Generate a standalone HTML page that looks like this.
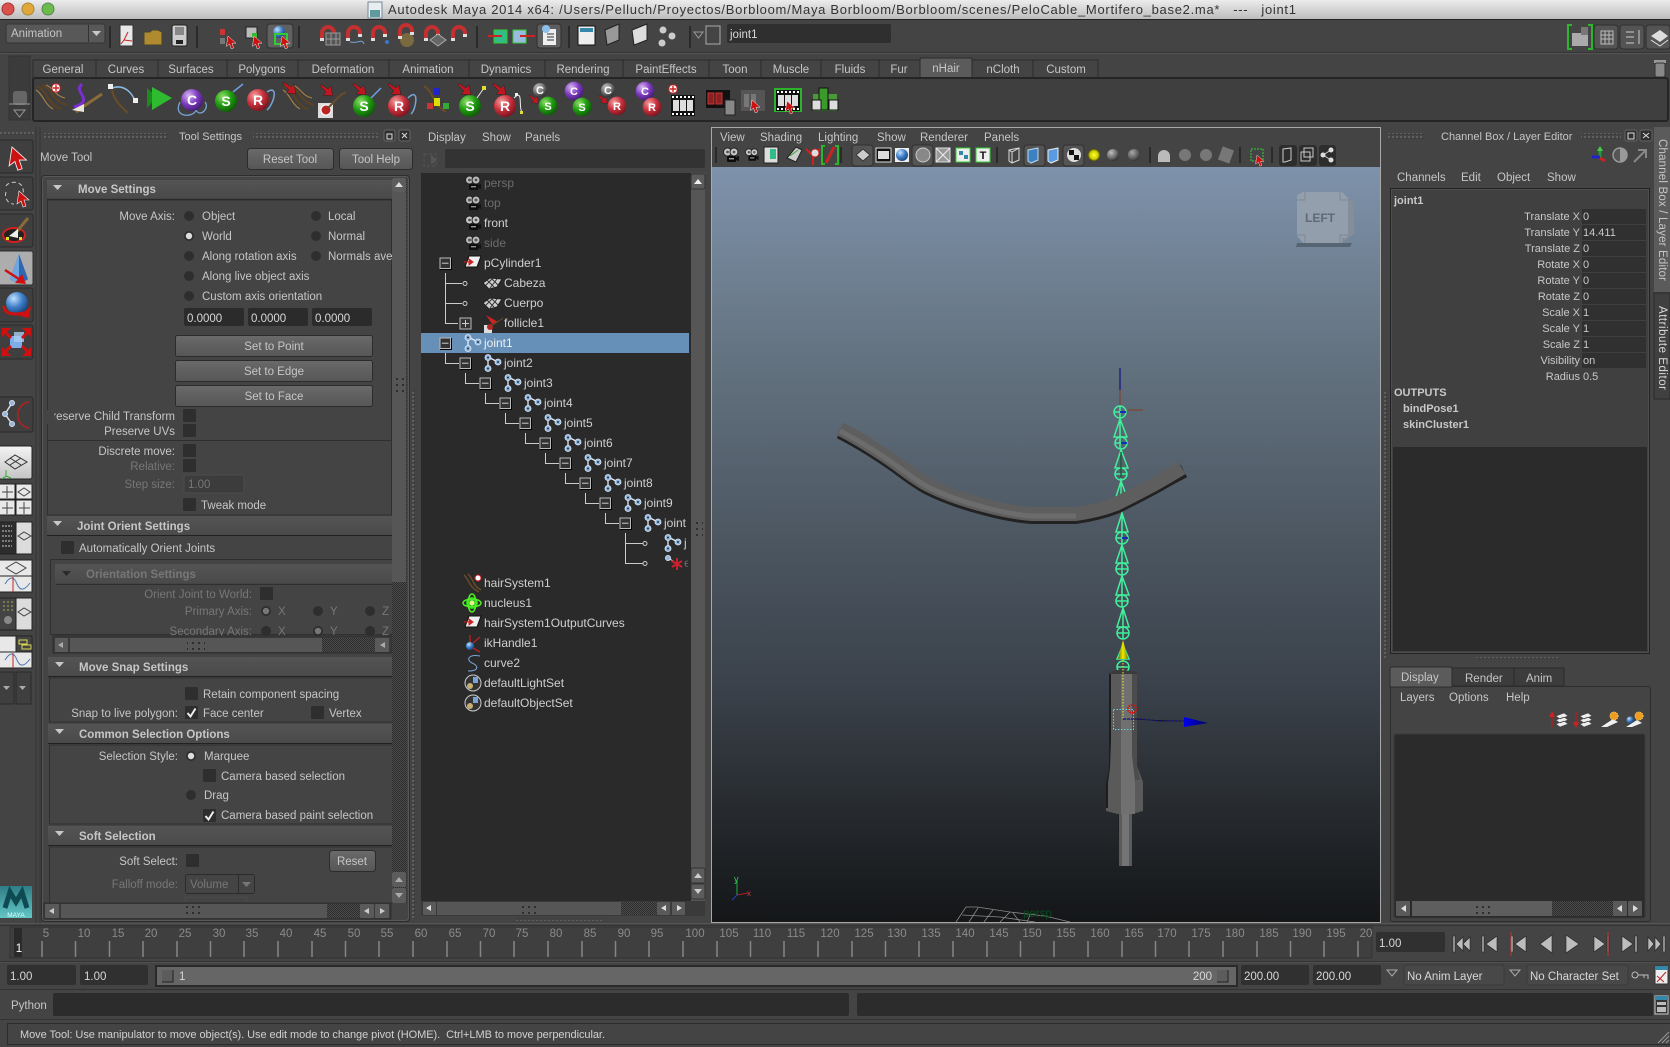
<!DOCTYPE html>
<html><head><meta charset="utf-8"><title>Maya</title>
<style>
html,body{margin:0;padding:0;background:#444;width:1670px;height:1047px;overflow:hidden}
svg{display:block}
text{font-family:"Liberation Sans",Arial,sans-serif;font-size:11.5px;fill:#c6c6c6;white-space:pre}
.d{fill:#777}.b{font-weight:bold}.r{text-anchor:end}.m{text-anchor:middle}
.o{font-size:12px;fill:#d0d0d0}.g{fill:#6e6e6e}
.c{font-size:11px;fill:#c8c8c8}
.t{fill:#8a8a8a;font-size:11.5px;text-anchor:middle}
.f{fill:#d8d8d8}
.w{fill:#fff;font-weight:bold;font-size:14px;text-anchor:middle}
.x{fill:#fff;font-weight:bold;font-size:11px;text-anchor:middle}
</style></head><body>
<svg xmlns="http://www.w3.org/2000/svg" width="1670" height="1047" viewBox="0 0 1670 1047">
<defs>
<linearGradient id="tb" x1="0" y1="0" x2="0" y2="1"><stop offset="0" stop-color="#ececec"/><stop offset="1" stop-color="#bdbdbd"/></linearGradient>
<linearGradient id="vp" x1="0" y1="0" x2="0" y2="1"><stop offset="0" stop-color="#7e92ab"/><stop offset=".24" stop-color="#657482"/><stop offset=".48" stop-color="#4d5863"/><stop offset=".7" stop-color="#394049"/><stop offset=".84" stop-color="#282c30"/><stop offset="1" stop-color="#141618"/></linearGradient>
<linearGradient id="btn" x1="0" y1="0" x2="0" y2="1"><stop offset="0" stop-color="#6a6a6a"/><stop offset="1" stop-color="#565656"/></linearGradient>
<linearGradient id="hdr" x1="0" y1="0" x2="0" y2="1"><stop offset="0" stop-color="#545454"/><stop offset="1" stop-color="#4a4a4a"/></linearGradient>
<linearGradient id="lay" x1="0" y1="0" x2="0" y2="1"><stop offset="0" stop-color="#f4f4f4"/><stop offset="1" stop-color="#c4c4c4"/></linearGradient>
<linearGradient id="yl" x1="0" y1="0" x2="1" y2="0"><stop offset="0" stop-color="#6b6b00"/><stop offset=".5" stop-color="#eded00"/><stop offset="1" stop-color="#777700"/></linearGradient>
<linearGradient id="bl" x1="0" y1="0" x2="1" y2="0"><stop offset="0" stop-color="#0000ee"/><stop offset="1" stop-color="#000066"/></linearGradient>
<linearGradient id="mya" x1="0" y1="0" x2="0" y2="1"><stop offset="0" stop-color="#2f7d86"/><stop offset="1" stop-color="#62c6c4"/></linearGradient>
<radialGradient id="sg" cx=".35" cy=".3" r=".8"><stop offset="0" stop-color="#8fe06a"/><stop offset=".5" stop-color="#1f9a10"/><stop offset="1" stop-color="#0a4d05"/></radialGradient>
<radialGradient id="sr" cx=".35" cy=".3" r=".8"><stop offset="0" stop-color="#f2a0a0"/><stop offset=".5" stop-color="#c8303c"/><stop offset="1" stop-color="#6a0f18"/></radialGradient>
<radialGradient id="sp" cx=".35" cy=".3" r=".8"><stop offset="0" stop-color="#d8b8f0"/><stop offset=".5" stop-color="#7e3cc0"/><stop offset="1" stop-color="#3a1468"/></radialGradient>
<radialGradient id="sb" cx=".35" cy=".3" r=".8"><stop offset="0" stop-color="#c0e0ff"/><stop offset=".5" stop-color="#3f7fc8"/><stop offset="1" stop-color="#123a70"/></radialGradient>
<radialGradient id="sgr" cx=".35" cy=".3" r=".8"><stop offset="0" stop-color="#c0c0c0"/><stop offset=".6" stop-color="#666"/><stop offset="1" stop-color="#222"/></radialGradient>
<radialGradient id="sy" cx=".5" cy=".5" r=".5"><stop offset="0" stop-color="#ffff30"/><stop offset=".7" stop-color="#cccc00"/><stop offset="1" stop-color="#555500"/></radialGradient>
<pattern id="hatch" width="2" height="2" patternUnits="userSpaceOnUse"><rect width="2" height="2" fill="#4c4c4c"/><rect width="1" height="1" fill="#2c2c2c"/><rect x="1" y="1" width="1" height="1" fill="#2c2c2c"/></pattern>
<pattern id="dots" width="4" height="4" patternUnits="userSpaceOnUse"><rect x="0" y="0" width="2" height="2" fill="#5f5f5f"/><rect x="2" y="2" width="1" height="1" fill="#333"/></pattern>
<pattern id="grip" width="6" height="6" patternUnits="userSpaceOnUse"><rect width="2" height="2" fill="#2f2f2f"/></pattern>

<g id="cam"><circle cx="4.5" cy="5" r="4" fill="#c8c8c8" stroke="#222"/><circle cx="11" cy="5" r="4" fill="#c8c8c8" stroke="#222"/><circle cx="4.5" cy="5" r="1.4" fill="#555"/><circle cx="11" cy="5" r="1.4" fill="#555"/><rect x="4" y="9" width="9" height="6" rx="1" fill="#0c0c0c"/><rect x="6" y="11" width="5" height="1.4" fill="#999"/><path d="M13 10L16 9V14L13 13Z" fill="#111"/></g>
<g id="jnt"><path d="M3 2V13M3 2L13 7" stroke="#e4eaf2" stroke-width="1.3" fill="none"/><circle cx="3" cy="2.5" r="3" fill="#8fb7e0" stroke="#dfeaf6" stroke-width=".8"/><circle cx="13" cy="7" r="3" fill="#8fb7e0" stroke="#dfeaf6" stroke-width=".8"/><circle cx="3" cy="13.500" r="3" fill="#8fb7e0" stroke="#dfeaf6" stroke-width=".8"/><circle cx="3" cy="2.5" r="1" fill="#234"/><circle cx="13" cy="7" r="1" fill="#234"/><circle cx="3" cy="13.500" r="1" fill="#234"/></g>
<g id="mi"><rect x=".5" y=".5" width="11" height="11" fill="#2a2a2a" stroke="#000"/><rect x="0" y="0" width="10.5" height="10.5" fill="#333" stroke="#bbb"/><path d="M2 5.2H8.5" stroke="#ccc"/></g>
<g id="tr"><path d="M4 1H16L12 12H0Z" fill="#eee" stroke="#111"/><path d="M-1 7H8M8 7L4 4V10Z" fill="#c22" stroke="#c22"/></g>
<g id="mesh"><path d="M0 6L7 1L19 2L14 10L6 12Z" fill="#cfcfcf" stroke="#222"/><path d="M4 3L11 10M8 1L15 8M10 1L3 8M14 2L7 11" stroke="#333"/></g>
<g id="radio"><circle r="5" fill="#2e2e2e"/></g>
<g id="radw"><circle r="5" fill="#2e2e2e"/><circle r="3.2" fill="#ddd"/></g>
<g id="radd"><circle r="5" fill="#2e2e2e"/><circle r="3.2" fill="#777"/></g>
<rect id="cb" width="13" height="13" rx="1" fill="#2e2e2e"/>
<g id="cbc"><rect width="13" height="13" rx="1" fill="#2e2e2e"/><path d="M2.5 7L5.5 10.5L10.5 2.5" fill="none" stroke="#eee" stroke-width="2"/></g>
<path id="tri" d="M0 0H9L4.5 5Z" fill="#c8c8c8"/>
<g id="mag"><path d="M2 15V7A6 6 0 0 1 14 7V10" fill="none" stroke="#c43030" stroke-width="4"/><rect x="0" y="12" width="4" height="3" fill="#ddd"/><rect x="12" y="8" width="4" height="3" fill="#ddd"/></g>
<g id="hair"><path d="M0 1C10 5 11 20 24 24M5 0C15 3 15 16 30 20" fill="none" stroke="#5d4222" stroke-width="2"/><path d="M-1 5C6 9 8 20 16 24M9 0C17 3 18 11 28 13" fill="none" stroke="#a88248" stroke-width="1.100"/></g>
<g id="arw"><path d="M0 0L10 9H5L7 15L4 16L2 10L-2 13Z" fill="#c11" stroke="#eee" stroke-width=".6"/></g>
<g id="ard"><path d="M0 0L7 5L10 2L12 12L2 11L5 8L-1 2Z" fill="#c01620" stroke="#222" stroke-width=".5"/></g>
<g id="sS"><circle r="11" fill="url(#sg)"/></g>
<g id="sR"><circle r="11" fill="url(#sr)"/></g>
<g id="sC"><circle r="11" fill="url(#sp)"/></g>
<g id="sCg"><circle r="7" fill="url(#sgr)"/></g>
<g id="film"><rect width="24" height="21" fill="#111"/><path d="M1 2H23M1 19H23" stroke="#fff" stroke-dasharray="2 2" stroke-width="2"/><rect x="2" y="5" width="6" height="11" fill="#ddd"/><rect x="9" y="5" width="6" height="11" fill="#ddd"/><rect x="16" y="5" width="6" height="11" fill="#ddd"/></g>
</defs>

<rect width="1670" height="1047" fill="#444"/>

<!-- title bar -->
<rect width="1670" height="19" fill="url(#tb)"/><rect y="19" width="1670" height="1" fill="#222"/>
<circle cx="8" cy="9" r="6" fill="#d9534c" stroke="#a33"/><circle cx="28" cy="9" r="6" fill="#e0a83a" stroke="#a83"/><circle cx="48" cy="9" r="6" fill="#6dbb4b" stroke="#585"/>
<rect x="368" y="2" width="14" height="16" fill="#e8eef0" stroke="#789"/><rect x="370" y="10" width="10" height="7" fill="#5e9aa0"/>
<text x="388" y="14" textLength="908" style="font-size:13px;fill:#333">Autodesk Maya 2014 x64: /Users/Pelluch/Proyectos/Borbloom/Maya Borbloom/Borbloom/scenes/PeloCable_Mortifero_base2.ma*   ---   joint1</text>

<!-- status line -->
<rect x="6" y="24" width="99" height="19" rx="2" fill="#585858" stroke="#333"/><rect x="88" y="25" width="1" height="17" fill="#333"/>
<text x="11" y="37" fill="#bbb">Animation</text><use href="#tri" x="92" y="31"/>
<path d="M110 26V48M197 26V48M299 26V48M477 26V48M569 26V48M690 26V48" stroke="#2a2a2a" stroke-width="2"/>
<rect x="120" y="25" width="13" height="21" fill="#e8e8e8" stroke="#333"/><path d="M124 40L128 32M124 40L132 41M124 40L121 44" stroke="#c22" fill="none"/>
<path d="M144 32H150L152 30H158L162 32V45H144Z" fill="#b08a2e" stroke="#443"/>
<rect x="172" y="25" width="15" height="21" rx="2" fill="#ccc" stroke="#222"/><rect x="175" y="27" width="9" height="8" fill="#888"/><rect x="176" y="40" width="7" height="4" fill="#222"/>
<rect x="220" y="29" width="5" height="6" fill="#c33"/><rect x="220" y="38" width="5" height="6" fill="#777"/><rect x="246" y="27" width="11" height="11" fill="#bbb" stroke="#222"/><rect x="252" y="33" width="5" height="5" fill="#3b3"/>
<rect x="267" y="24" width="26" height="24" rx="3" fill="#606060" stroke="#2f2f2f"/><circle cx="279" cy="32" r="6" fill="url(#sb)"/><rect x="275" y="34" width="12" height="10" fill="none" stroke="#3c3" stroke-width="2"/>
<use href="#arw" transform="translate(228 36) scale(.8)"/><use href="#arw" transform="translate(254 36) scale(.8)"/><use href="#arw" transform="translate(282 36) scale(.8)"/>
<use href="#mag" x="320" y="26"/><rect x="326" y="33" width="14" height="12" fill="#555" stroke="#999"/><path d="M331 33V45M336 33V45M326 39H340" stroke="#999"/>
<use href="#mag" x="346" y="26"/><path d="M350 42C358 44 362 38 364 44" stroke="#7aa4d8" fill="none"/>
<use href="#mag" x="371" y="26"/><circle cx="387" cy="42" r="2" fill="#3b78c8"/>
<circle cx="407" cy="40" r="7" fill="#7a6a40"/><use href="#mag" x="398" y="24"/>
<use href="#mag" x="424" y="26"/><path d="M430 40L438 34L446 40L438 46Z" fill="#666" stroke="#aaa"/>
<use href="#mag" x="451" y="26"/>
<rect x="494" y="30" width="13" height="13" fill="#3b8" stroke="#3c3"/><path d="M488 36H502" stroke="#c22" stroke-width="2"/>
<rect x="513" y="30" width="13" height="13" fill="#9bd" stroke="#3c3"/><path d="M520 36H535" stroke="#c22" stroke-width="2"/>
<rect x="537" y="24" width="24" height="24" rx="3" fill="#5e5e5e" stroke="#2f2f2f"/><rect x="543" y="29" width="13" height="16" fill="#eee"/><circle cx="546" cy="29" r="4" fill="#8cc0ea"/><path d="M547 34H554M547 37H554M547 40H554" stroke="#333"/>
<rect x="578" y="26" width="17" height="19" fill="#eee" stroke="#111"/><rect x="580" y="28" width="13" height="4" fill="#38a"/>
<path d="M605 30L619 24V40L607 45Z" fill="#999" stroke="#222"/><path d="M632 30L647 24V40L634 45Z" fill="#ddd" stroke="#222"/><circle cx="663" cy="30" r="3.5" fill="#ccc"/><circle cx="672" cy="36" r="3.5" fill="#ccc"/><circle cx="662" cy="43" r="3.5" fill="#ccc"/>
<path d="M694 32H703L698.500 38Z" fill="none" stroke="#999"/>
<rect x="706" y="26" width="14" height="18" fill="none" stroke="#aaa"/>
<rect x="727" y="24" width="164" height="19" rx="2" fill="#2f2f2f"/><text x="730" y="38" class="f">joint1</text>
<path d="M1572 25H1568V49H1572M1588 25H1592V49H1588" fill="none" stroke="#2db52d" stroke-width="2"/><rect x="1572" y="33" width="16" height="13" fill="#aaa"/><rect x="1581" y="27" width="7" height="8" fill="#777"/>
<rect x="1594" y="25" width="24" height="24" rx="3" fill="#545454" stroke="#2f2f2f"/><rect x="1601" y="31" width="12" height="13" fill="none" stroke="#bbb"/><path d="M1601 35H1613M1601 39H1613M1605 31V44M1609 31V44" stroke="#bbb"/>
<rect x="1620" y="25" width="24" height="24" rx="3" fill="#545454" stroke="#2f2f2f"/><path d="M1626 32H1634M1626 37H1634M1626 43H1634M1639 30V44" stroke="#ccc"/>
<rect x="1646" y="25" width="24" height="24" rx="3" fill="#545454" stroke="#2f2f2f"/><path d="M1651 36L1660 30L1668 36L1660 42Z" fill="#ddd"/><path d="M1651 40L1660 46L1668 40" stroke="#ddd" fill="none"/>
<rect y="52" width="1670" height="1" fill="#333"/><rect y="53" width="1670" height="1" fill="#555"/>

<!-- shelf area -->
<rect x="9" y="56" width="21" height="64" fill="#3b3b3b" stroke="#333"/><rect x="13" y="91" width="14" height="14" rx="3" fill="#666"/><path d="M9 104H30" stroke="#999"/><path d="M14 110H25L19.500 117Z" fill="none" stroke="#999"/>
<g fill="#444" stroke="#2b2b2b">
<path d="M33 78V60H96V78M96 60H158V78M158 60H227V78M227 60H298V78M298 60H389V78M389 60H469V78M469 60H545V78M545 60H623V78M623 60H709V78M709 60H761V78M761 60H821V78M821 60H879V78M879 60H920V78M972 60H1033V78M1033 60H1098V78"/>
</g>
<path d="M920 78V60Q920 58 922 58H970Q972 58 972 60V78Z" fill="#5b5b5b" stroke="#2b2b2b"/>
<g><text x="63" y="73" class="m">General</text><text x="126" y="73" class="m">Curves</text><text x="191" y="73" class="m">Surfaces</text><text x="262" y="73" class="m">Polygons</text><text x="343" y="73" class="m">Deformation</text><text x="428" y="73" class="m">Animation</text><text x="506" y="73" class="m">Dynamics</text><text x="583" y="73" class="m">Rendering</text><text x="666" y="73" class="m">PaintEffects</text><text x="735" y="73" class="m">Toon</text><text x="791" y="73" class="m">Muscle</text><text x="850" y="73" class="m">Fluids</text><text x="899" y="73" class="m">Fur</text><text x="946" y="72" class="m">nHair</text><text x="1003" y="73" class="m">nCloth</text><text x="1066" y="73" class="m">Custom</text></g>
<rect x="1654" y="60" width="12" height="3" fill="#999"/><rect x="1655" y="63" width="10" height="14" rx="2" fill="#888" stroke="#333"/>
<rect x="33" y="78" width="1635" height="43" rx="2" fill="#3f3f3f" stroke="#252525" stroke-width="2"/>

<!-- shelf icons -->
<use href="#hair" x="37" y="85"/><path d="M56 84V92M52 88H60" stroke="#d22" stroke-width="1.500"/><rect x="52" y="84" width="8" height="8" rx="3" fill="#fff" stroke="#c22"/><path d="M56 85V91M53 88H59" stroke="#c22" stroke-width="1.400"/>
<path d="M74 107C96 100 72 92 82 84" fill="none" stroke="#7b2fd0" stroke-width="3"/><path d="M76 112L84 106L102 94" stroke="#8a6a3a" stroke-width="3" fill="none"/><path d="M72 110L84 104L84 112Z" fill="#e8e8d8"/>
<path d="M112 88C124 84 132 92 136 103" fill="none" stroke="#8abbe8" stroke-width="1.500"/><path d="M112 90C114 100 120 106 128 113" fill="none" stroke="#6a4c28" stroke-width="2"/><rect x="108" y="84" width="5" height="5" fill="#eee"/><rect x="133" y="98" width="5" height="5" fill="#eee"/>
<path d="M147 88L157 97L147 108Z" fill="#1c8a1c"/><path d="M152 87L172 98L152 110Z" fill="#2fbb2f"/>
<path d="M180 102C172 118 194 118 196 110C200 118 210 108 205 102" fill="none" stroke="#7aa4d8" stroke-width="1.300"/><use href="#sC" x="192" y="100"/><text x="192" y="105" class="w">C</text>
<use href="#sS" x="226" y="101"/><text x="226" y="106" class="w">S</text><path d="M233 92L243 84" stroke="#6ea2e0" stroke-width="1.500"/>
<use href="#sR" x="258" y="100"/><text x="258" y="105" class="w">R</text><path d="M267 92C279 84 274 104 267 110" fill="none" stroke="#7aa4d8" stroke-width="1.500"/>
<use href="#hair" transform="translate(284 85)"/><use href="#ard" transform="translate(284 82)"/>
<rect x="318" y="103" width="15" height="15" fill="#ddd"/><circle cx="326" cy="110" r="5" fill="#b22" stroke="#fff"/><path d="M328 108C336 100 338 96 346 92" stroke="#6a4c28" stroke-width="2" fill="none"/><use href="#ard" transform="translate(321 84)"/>
<use href="#sS" x="364" y="106"/><text x="364" y="111" class="w">S</text><path d="M371 98L381 88" stroke="#6ea2e0" stroke-width="1.500"/><use href="#ard" transform="translate(354 83)"/>
<use href="#sR" x="399" y="106"/><text x="399" y="111" class="w">R</text><path d="M408 98C420 86 416 110 411 114" fill="none" stroke="#7aa4d8" stroke-width="1.500"/><use href="#ard" transform="translate(389 83)"/>
<path d="M424 86C434 92 432 104 446 112" fill="none" stroke="#6a4c28" stroke-width="2"/><rect x="434" y="88" width="6" height="7" fill="#22c"/><rect x="434" y="98" width="6" height="8" fill="#dd0"/><rect x="427" y="103" width="6" height="6" fill="#c33"/><rect x="443" y="103" width="6" height="6" fill="#3a3"/>
<use href="#sS" x="470" y="106"/><text x="470" y="111" class="w">S</text><path d="M477 98L484 88" stroke="#eee"/><rect x="482" y="86" width="4" height="4" fill="#dd3"/><use href="#ard" transform="translate(459 83)"/>
<use href="#sR" x="505" y="106"/><text x="505" y="111" class="w">R</text><path d="M514 98C524 88 518 108 522 112" fill="none" stroke="#eee"/><rect x="515" y="93" width="3" height="3" fill="#eee"/><rect x="520" y="111" width="3" height="3" fill="#dd3"/><use href="#ard" transform="translate(494 83)"/>
<use href="#sCg" x="540" y="90"/><text x="540" y="94" class="x">C</text><use href="#sS" transform="translate(548 106) scale(.85)"/><text x="548" y="110" class="x">S</text><use href="#ard" transform="translate(530 95) scale(.7)"/>
<use href="#sC" transform="translate(574 91) scale(.85)"/><text x="574" y="95" class="x">C</text><use href="#sS" transform="translate(582 107) scale(.85)"/><text x="582" y="111" class="x">S</text>
<use href="#sCg" x="608" y="90"/><text x="608" y="94" class="x">C</text><use href="#sR" transform="translate(617 106) scale(.85)"/><text x="617" y="110" class="x">R</text><use href="#ard" transform="translate(599 95) scale(.7)"/>
<use href="#sC" transform="translate(645 91) scale(.85)"/><text x="645" y="95" class="x">C</text><use href="#sR" transform="translate(652 107) scale(.85)"/><text x="652" y="111" class="x">R</text>
<use href="#film" x="671" y="95"/><rect x="669" y="85" width="8" height="8" rx="3" fill="#fff" stroke="#c22"/><path d="M673 86V92M670 89H676" stroke="#c22" stroke-width="1.400"/>
<rect x="706" y="90" width="24" height="18" fill="#111"/><rect x="708" y="93" width="6" height="11" fill="#822" stroke="#c33"/><rect x="716" y="93" width="6" height="11" fill="#822" stroke="#c33"/><rect x="725" y="100" width="10" height="15" fill="#888" stroke="#222"/>
<rect x="741" y="90" width="24" height="21" fill="#555"/><rect x="744" y="94" width="5" height="13" fill="#777"/><rect x="751" y="94" width="5" height="13" fill="#777"/><use href="#arw" transform="translate(752 100) scale(.8)"/>
<rect x="775" y="89" width="26" height="22" fill="none" stroke="#2bb42b" stroke-width="2"/><use href="#film" transform="translate(776 90)"/><use href="#arw" transform="translate(787 101) scale(.8)"/>
<rect x="813" y="94" width="24" height="17" fill="#4a9a3a"/><rect x="819" y="88" width="9" height="22" fill="#3a9a2a" stroke="#111"/><rect x="812" y="100" width="9" height="10" fill="#ddd" stroke="#111"/><rect x="829" y="100" width="9" height="10" fill="#ddd" stroke="#111"/>

<!-- left toolbox -->
<path d="M36 127V925M40 127V925" stroke="#333"/>
<rect x="0" y="131" width="34" height="5" fill="url(#dots)"/>
<g fill="#3f3f3f" stroke="#2a2a2a"><rect x="-3" y="140" width="36" height="33" rx="2"/><rect x="-3" y="177" width="36" height="33" rx="2"/><rect x="-3" y="214" width="36" height="33" rx="2"/><rect x="-3" y="288" width="36" height="34" rx="2"/><rect x="-3" y="325" width="36" height="34" rx="2"/><rect x="-3" y="397" width="36" height="35" rx="2"/></g>
<rect x="-3" y="251" width="36" height="34" rx="2" fill="#adadad" stroke="#2a2a2a"/>
<use href="#arw" transform="translate(12 147) scale(1.450)" />
<path d="M6 186C8 182 18 180 22 186C24 190 24 196 20 200M6 192C4 198 8 204 14 204" fill="none" stroke="#ccc" stroke-dasharray="4 3"/><use href="#arw" transform="translate(19 191)"/>
<ellipse cx="14" cy="235" rx="11" ry="7" fill="#222" stroke="#d02020" stroke-width="2"/><path d="M14 235L28 218" stroke="#8a6a3a" stroke-width="3"/><path d="M9 236L18 229L18 238Z" fill="#eee"/><rect x="6" y="237" width="3" height="3" fill="#dd3"/><rect x="19" y="237" width="3" height="3" fill="#dd3"/>
<path d="M19 254L28 279C24 283 14 283 10 279Z" fill="#2e66b0"/><path d="M19 254L19 282C15 282 12 281 10 279Z" fill="#6ea6e4"/><path d="M5 270L22 281" stroke="#d01010" stroke-width="2.500"/><path d="M26 284L15 283L22 274Z" fill="#d01010"/>
<circle cx="17" cy="303" r="11" fill="url(#sb)"/><path d="M4 306C4 314 14 316 28 312" fill="none" stroke="#d01010" stroke-width="3"/><path d="M31 306L29 318L20 316Z" fill="#d01010"/>
<path d="M10 336L22 336L22 348L10 348Z" fill="#7eaee8"/><path d="M14 332L24 332V342L14 342Z" fill="#a9ccf2" opacity=".8"/><path d="M6 333L11 338M27 333L22 338M6 351L11 346M27 351L22 346" stroke="#d01010" stroke-width="3"/><path d="M2 328H11L2 337ZM31 328H22L31 337ZM2 356H11L2 347ZM31 356H22L31 347Z" fill="#d01010"/>
<path d="M5 414L12 403M5 414L12 424" stroke="#dde" stroke-width="1.500"/><circle cx="5" cy="414" r="2.500" fill="#8fb7e0" stroke="#dde"/><circle cx="12" cy="403" r="2.500" fill="#8fb7e0" stroke="#dde"/><circle cx="12" cy="424" r="2.500" fill="#8fb7e0" stroke="#dde"/><path d="M29 402C14 404 14 426 29 428" fill="none" stroke="#b52020" stroke-width="1.500"/>
<rect x="-2" y="446" width="34" height="33" rx="2" fill="url(#lay)" stroke="#222"/><path d="M5 462L15 455L27 462L15 469Z" fill="none" stroke="#333"/><path d="M10 458L21 465M21 458L10 465" stroke="#333"/><path d="M6 470V476M6 476L2 479M6 476L11 478" stroke="#3a3"/>
<rect x="-2" y="484" width="17" height="15" fill="#e8e8e8" stroke="#222"/><rect x="16" y="484" width="16" height="15" fill="#e8e8e8" stroke="#222"/><rect x="-2" y="500" width="17" height="15" fill="#e8e8e8" stroke="#222"/><rect x="16" y="500" width="16" height="15" fill="#e8e8e8" stroke="#222"/>
<path d="M2 492H13M7 486V498M2 508H13M7 502V514M19 508H30M24 502V514" stroke="#444"/><path d="M18 492L24 488L30 492L24 496Z" fill="none" stroke="#444"/>
<rect x="-2" y="522" width="18" height="32" fill="#2d2d2d" stroke="#222"/><rect x="16" y="522" width="16" height="32" fill="#dcdcdc" stroke="#222"/><path d="M2 526H12M2 531H12M2 536H12M2 541H12M2 546H12" stroke="#ccc" stroke-dasharray="2 1"/><path d="M18 536L24 532L31 536L24 540Z" fill="none" stroke="#444"/>
<rect x="-2" y="560" width="34" height="16" fill="#e8e8e8" stroke="#222"/><rect x="-2" y="576" width="34" height="16" fill="#e8e8e8" stroke="#222"/><path d="M6 568L16 562L26 568L16 574Z" fill="none" stroke="#444"/><path d="M5 584C10 576 14 576 17 584C20 591 24 591 30 583" stroke="#4a78b0" fill="none"/><path d="M13 577V592" stroke="#c22"/>
<rect x="-2" y="598" width="18" height="32" fill="#444" stroke="#222"/><rect x="16" y="598" width="16" height="32" fill="#dcdcdc" stroke="#222"/><circle cx="8" cy="620" r="4" fill="#888"/><path d="M3 602H14M3 606H14M3 610H14" stroke="#aa5" stroke-dasharray="2 2"/><path d="M18 612L24 608L31 612L24 616Z" fill="none" stroke="#444"/>
<rect x="-2" y="636" width="18" height="16" fill="#e8e8e8" stroke="#222"/><rect x="16" y="636" width="16" height="16" fill="#444" stroke="#222"/><rect x="-2" y="652" width="34" height="16" fill="#e8e8e8" stroke="#222"/><path d="M19 640H27V644H19ZM22 645H31V649H22Z" fill="none" stroke="#dd5"/><path d="M5 660C10 652 14 652 17 660C20 667 24 667 30 659" stroke="#4a78b0" fill="none"/><path d="M13 653V668" stroke="#c22"/>
<rect x="-2" y="672" width="16" height="32" fill="#3f3f3f" stroke="#2a2a2a"/><rect x="16" y="672" width="15" height="32" fill="#3f3f3f" stroke="#2a2a2a"/><path d="M3 686H10L6.500 690ZM19 686H26L22.500 690Z" fill="#aaa"/>
<rect x="0" y="886" width="32" height="32" fill="url(#mya)"/><path d="M5 908L10 892L16 902L22 892L27 908" fill="none" stroke="#0e4a52" stroke-width="5"/><text x="16" y="917" class="m" style="font-size:6.500px;fill:#dff">MAYA</text>

<!-- Tool Settings -->
<rect x="43" y="133" width="125" height="6" fill="url(#dots)"/><rect x="253" y="133" width="125" height="6" fill="url(#dots)"/>
<text x="179" y="140" style="font-size:11px">Tool Settings</text>
<rect x="384" y="130" width="11" height="11" rx="2" fill="#2f2f2f" stroke="#666"/><rect x="387" y="134" width="5" height="5" fill="none" stroke="#ddd"/><rect x="399" y="130" width="11" height="11" rx="2" fill="#2f2f2f" stroke="#666"/><path d="M402 133L407 138M407 133L402 138" stroke="#ddd"/>
<text x="40" y="161">Move Tool</text>
<rect x="247.500" y="148.500" width="86" height="21" rx="3" fill="url(#btn)" stroke="#2c2c2c"/><text x="290" y="163" class="m">Reset Tool</text>
<rect x="339.500" y="148.500" width="73" height="21" rx="3" fill="url(#btn)" stroke="#2c2c2c"/><text x="376" y="163" class="m">Tool Help</text>
<rect x="41.500" y="175.500" width="368" height="746" rx="3" fill="none" stroke="#2d2d2d"/><rect x="42.500" y="176.500" width="366" height="744" rx="3" fill="none" stroke="#585858"/>

<svg x="46" y="178" width="346" height="725" viewBox="46 178 346 725">
<rect x="46" y="178" width="346" height="725" fill="#444"/>
<rect x="47" y="180" width="345" height="18" fill="url(#hdr)"/><rect x="47" y="199" width="345" height="1" fill="#222"/>
<use href="#tri" x="53" y="185"/><text x="78" y="193" class="b">Move Settings</text>
<rect x="47.500" y="200" width="344" height="315" fill="none" stroke="#2f2f2f"/>
<text x="175" y="220" class="r">Move Axis:</text>
<use href="#radio" x="189" y="216"/><text x="202" y="220">Object</text><use href="#radio" x="316" y="216"/><text x="328" y="220">Local</text>
<use href="#radw" x="189" y="236"/><text x="202" y="240">World</text><use href="#radio" x="316" y="236"/><text x="328" y="240">Normal</text>
<use href="#radio" x="189" y="256"/><text x="202" y="260">Along rotation axis</text><use href="#radio" x="316" y="256"/><text x="328" y="260">Normals ave</text>
<use href="#radio" x="189" y="276"/><text x="202" y="280">Along live object axis</text>
<use href="#radio" x="189" y="296"/><text x="202" y="300">Custom axis orientation</text>
<g fill="#2b2b2b"><rect x="184" y="308" width="60" height="18" rx="2"/><rect x="248" y="308" width="60" height="18" rx="2"/><rect x="312" y="308" width="60" height="18" rx="2"/></g>
<text x="187" y="322" class="f">0.0000</text><text x="251" y="322" class="f">0.0000</text><text x="315" y="322" class="f">0.0000</text>
<g fill="url(#btn)" stroke="#2c2c2c"><rect x="175.500" y="335.500" width="197" height="21" rx="2"/><rect x="175.500" y="360.500" width="197" height="21" rx="2"/><rect x="175.500" y="385.500" width="197" height="21" rx="2"/></g>
<text x="274" y="350" class="m">Set to Point</text><text x="274" y="375" class="m">Set to Edge</text><text x="274" y="400" class="m">Set to Face</text>
<text x="175" y="420" class="r">Preserve Child Transform</text><rect x="46" y="410" width="8" height="14" fill="#444"/>
<use href="#cb" x="183" y="409"/><text x="175" y="435" class="r">Preserve UVs</text><use href="#cb" x="183" y="424"/>
<rect x="48" y="440" width="344" height="1" fill="#2f2f2f"/>
<text x="175" y="455" class="r">Discrete move:</text><use href="#cb" x="183" y="444"/>
<text x="175" y="470" class="r d">Relative:</text><use href="#cb" x="183" y="459"/>
<text x="175" y="488" class="r d">Step size:</text><rect x="184" y="475" width="60" height="18" rx="2" fill="#3c3c3c" stroke="#4c4c4c"/><text x="188" y="488" class="d">1.00</text>
<use href="#cb" x="183" y="498"/><text x="201" y="509">Tweak mode</text>

<rect x="47" y="516" width="345" height="19" fill="url(#hdr)"/><rect x="47" y="535" width="345" height="1" fill="#222"/>
<use href="#tri" x="53" y="521"/><text x="77" y="530" class="b">Joint Orient Settings</text>
<use href="#cb" x="61" y="541"/><text x="79" y="552">Automatically Orient Joints</text>
<rect x="50.500" y="559.500" width="345" height="75" fill="none" stroke="#2f2f2f"/>
<rect x="55" y="564" width="340" height="19" fill="url(#hdr)"/><path d="M62 571H71L66.500 576Z" fill="#2a2a2a"/><text x="86" y="578" class="b d">Orientation Settings</text>
<rect x="56" y="584" width="340" height="1" fill="#2f2f2f"/>
<text x="252" y="598" class="r d">Orient Joint to World:</text><use href="#cb" x="260" y="587"/>
<text x="252" y="615" class="r d">Primary Axis:</text><use href="#radd" x="266" y="611"/><text x="278" y="615" class="d">X</text><use href="#radio" x="318" y="611"/><text x="330" y="615" class="d">Y</text><use href="#radio" x="370" y="611"/><text x="382" y="615" class="d">Z</text>
<text x="252" y="635" class="r d">Secondary Axis:</text><use href="#radio" x="266" y="631"/><text x="278" y="635" class="d">X</text><use href="#radd" x="318" y="631"/><text x="330" y="635" class="d">Y</text><use href="#radio" x="370" y="631"/><text x="382" y="635" class="d">Z</text>
<rect x="50" y="636" width="345" height="20" fill="#444"/>
<rect x="53" y="636" width="339" height="17" fill="#3a3a3a" stroke="#2d2d2d"/>
<rect x="55" y="638" width="13" height="14" rx="1" fill="#5a5a5a"/><path d="M63 642V648L58 645Z" fill="#aaa"/>
<rect x="70" y="638" width="252" height="14" fill="#565656"/><rect x="187" y="640" width="18" height="10" fill="url(#grip)"/><rect x="322" y="638" width="53" height="14" fill="url(#hatch)"/><rect x="375" y="638" width="14" height="14" rx="1" fill="#5a5a5a"/><path d="M385 642V648L380 645Z" fill="#aaa"/>

<rect x="48" y="657" width="344" height="19" fill="url(#hdr)"/><rect x="48" y="676" width="344" height="1" fill="#222"/>
<use href="#tri" x="55" y="662"/><text x="79" y="671" class="b">Move Snap Settings</text>
<rect x="49.500" y="678" width="344" height="44" fill="none" stroke="#2f2f2f"/>
<use href="#cb" x="185" y="687"/><text x="203" y="698">Retain component spacing</text>
<text x="178" y="717" class="r">Snap to live polygon:</text><use href="#cbc" x="185" y="706"/><text x="203" y="717">Face center</text><use href="#cb" x="311" y="706"/><text x="329" y="717">Vertex</text>
<rect x="48" y="724" width="344" height="19" fill="url(#hdr)"/><rect x="48" y="743" width="344" height="1" fill="#222"/>
<use href="#tri" x="55" y="729"/><text x="79" y="738" class="b">Common Selection Options</text>
<rect x="49.500" y="745" width="344" height="79" fill="none" stroke="#2f2f2f"/>
<text x="178" y="760" class="r">Selection Style:</text><use href="#radw" x="191" y="756"/><text x="204" y="760">Marquee</text>
<use href="#cb" x="203" y="769"/><text x="221" y="780">Camera based selection</text>
<use href="#radio" x="191" y="795"/><text x="204" y="799">Drag</text>
<use href="#cbc" x="203" y="809"/><text x="221" y="819">Camera based paint selection</text>
<rect x="48" y="826" width="344" height="19" fill="url(#hdr)"/><rect x="48" y="845" width="344" height="1" fill="#222"/>
<use href="#tri" x="55" y="831"/><text x="79" y="840" class="b">Soft Selection</text>
<rect x="49.500" y="847" width="344" height="60" fill="none" stroke="#2f2f2f"/>
<text x="178" y="865" class="r">Soft Select:</text><use href="#cb" x="186" y="854"/>
<rect x="329.500" y="850.500" width="46" height="21" rx="3" fill="url(#btn)" stroke="#2c2c2c"/><text x="352" y="865" class="m">Reset</text>
<text x="178" y="888" class="r d">Falloff mode:</text><rect x="185.500" y="874.500" width="69" height="19" rx="2" fill="#444" stroke="#2c2c2c"/><rect x="238" y="875" width="1" height="18" fill="#2c2c2c"/><text x="190" y="888" class="d">Volume</text><path d="M242 882H251L246.500 887Z" fill="#777"/>
<rect x="185.500" y="897" width="61" height="8" fill="none" stroke="#4a4a4a"/>
</svg>

<!-- tool settings v scroll -->
<rect x="392" y="178" width="15" height="725" fill="url(#hatch)"/>
<rect x="392" y="178" width="14" height="14" rx="2" fill="#5c5c5c"/><path d="M395 187H403L399 182Z" fill="#ddd"/>
<rect x="392" y="192" width="14" height="390" fill="#565656"/><rect x="394" y="378" width="10" height="18" fill="url(#grip)"/>
<rect x="392" y="872" width="14" height="15" rx="2" fill="#5c5c5c"/><path d="M395 882H403L399 877Z" fill="#aaa"/><rect x="392" y="888" width="14" height="15" rx="2" fill="#5c5c5c"/><path d="M395 893H403L399 898Z" fill="#aaa"/>
<rect x="44" y="903" width="347" height="16" fill="#3a3a3a" stroke="#2d2d2d"/>
<rect x="45" y="904" width="14" height="14" rx="1" fill="#5a5a5a"/><path d="M54 908V914L49 911Z" fill="#ccc"/><rect x="61" y="904" width="266" height="14" fill="#565656"/><rect x="185" y="906" width="18" height="10" fill="url(#grip)"/><rect x="327" y="904" width="33" height="14" fill="url(#hatch)"/><rect x="360" y="904" width="14" height="14" rx="1" fill="#5a5a5a"/><path d="M369 908V914L364 911Z" fill="#ccc"/><rect x="375" y="904" width="14" height="14" rx="1" fill="#5a5a5a"/><path d="M380 908V914L385 911Z" fill="#ccc"/>
<rect x="412" y="390" width="3" height="530" fill="url(#dots)"/>

<!-- Outliner -->
<text x="428" y="141">Display</text><text x="482" y="141">Show</text><text x="525" y="141">Panels</text>
<path d="M424 154H436V166H424Z" fill="none" stroke="#555" stroke-dasharray="3 2"/><path d="M431 155L437 160L431 165Z" fill="#555"/>
<rect x="445" y="149" width="260" height="19" rx="2" fill="#333"/>
<rect x="421" y="173" width="270" height="728" fill="#2a2a2a"/>
<rect x="421" y="333" width="268" height="20" fill="#6690b8"/>
<svg x="421" y="173" width="267" height="728" viewBox="421 173 267 728">
<use href="#cam" x="465" y="175" opacity=".9"/><text x="484" y="187" class="o g">persp</text>
<use href="#cam" x="465" y="195" opacity=".9"/><text x="484" y="207" class="o g">top</text>
<use href="#cam" x="465" y="215"/><text x="484" y="227" class="o">front</text>
<use href="#cam" x="465" y="235" opacity=".9"/><text x="484" y="247" class="o g">side</text>
<g stroke="#ccc" fill="none"><path d="M445.500 273V323.500H458M445.500 283.500H462M445.500 303.500H462"/><circle cx="465" cy="283.500" r="2"/><circle cx="465" cy="303.500" r="2"/>
<path d="M445.500 353V363.500H459M465.500 373V383.500H479M485.500 393V403.500H499M505.500 413V423.500H519M525.500 433V443.500H539M545.500 453V463.500H559M565.500 473V483.500H579M585.500 493V503.500H599M605.500 513V523.500H619"/>
<path d="M625.500 533V563.500H643M625.500 543.500H643"/><circle cx="645" cy="543.500" r="2"/><circle cx="645" cy="563.500" r="2"/></g>
<use href="#mi" x="440" y="258"/><use href="#tr" x="465" y="255"/><text x="484" y="267" class="o">pCylinder1</text>
<use href="#mesh" x="483" y="277"/><text x="504" y="287" class="o">Cabeza</text>
<use href="#mesh" x="483" y="297"/><text x="504" y="307" class="o">Cuerpo</text>
<rect x="460" y="318" width="11" height="11" fill="#333" stroke="#bbb"/><path d="M462 323.500H469M465.500 320V327" stroke="#ccc"/>
<rect x="484" y="325" width="8" height="8" fill="#ddd"/><circle cx="490" cy="327" r="3" fill="#b22"/><path d="M486 315L498 322L492 324Z" fill="#c22"/><path d="M490 327C496 322 498 322 503 318" stroke="#6a4c28" fill="none"/><text x="504" y="327" class="o">follicle1</text>
<use href="#mi" x="440" y="338"/><use href="#jnt" x="465" y="335"/><text x="484" y="347" class="o" style="fill:#f0f0f0">joint1</text>
<use href="#mi" x="460" y="358"/><use href="#jnt" x="485" y="355"/><text x="504" y="367" class="o">joint2</text>
<use href="#mi" x="480" y="378"/><use href="#jnt" x="505" y="375"/><text x="524" y="387" class="o">joint3</text>
<use href="#mi" x="500" y="398"/><use href="#jnt" x="525" y="395"/><text x="544" y="407" class="o">joint4</text>
<use href="#mi" x="520" y="418"/><use href="#jnt" x="545" y="415"/><text x="564" y="427" class="o">joint5</text>
<use href="#mi" x="540" y="438"/><use href="#jnt" x="565" y="435"/><text x="584" y="447" class="o">joint6</text>
<use href="#mi" x="560" y="458"/><use href="#jnt" x="585" y="455"/><text x="604" y="467" class="o">joint7</text>
<use href="#mi" x="580" y="478"/><use href="#jnt" x="605" y="475"/><text x="624" y="487" class="o">joint8</text>
<use href="#mi" x="600" y="498"/><use href="#jnt" x="625" y="495"/><text x="644" y="507" class="o">joint9</text>
<use href="#mi" x="620" y="518"/><use href="#jnt" x="645" y="515"/><text x="664" y="527" class="o">joint</text>
<use href="#jnt" x="665" y="535"/><text x="684" y="547" class="o">j</text>
<circle cx="668" cy="558" r="2.500" fill="#8fb7e0" stroke="#dde"/><path d="M670 559L676 563" stroke="#dde"/><path d="M677 558V570M672 561L682 567M682 561L672 567" stroke="#c8202c" stroke-width="2"/><text x="684" y="567" class="o g">e</text>
<g transform="translate(464 575)"><path d="M0 0C6 6 5 12 15 17M4 -1C10 5 9 11 17 15" fill="none" stroke="#6a4c28" stroke-width="1.400"/></g><circle cx="478" cy="578" r="3" fill="#fff" stroke="#c22"/><text x="484" y="587" class="o">hairSystem1</text>
<circle cx="472" cy="603" r="6" fill="#2c2" /><ellipse cx="472" cy="603" rx="9" ry="4" fill="none" stroke="#5e2" stroke-width="1.500"/><ellipse cx="472" cy="603" rx="4" ry="9" fill="none" stroke="#5e2" stroke-width="1.500"/><circle cx="472" cy="603" r="2.500" fill="#ee8"/><text x="484" y="607" class="o">nucleus1</text>
<use href="#tr" x="465" y="615"/><text x="484" y="627" class="o">hairSystem1OutputCurves</text>
<circle cx="470" cy="646" r="4" fill="url(#sb)"/><path d="M470 635V642M473 643L480 637M473 648L480 652" stroke="#b22" stroke-width="1.400"/><text x="484" y="647" class="o">ikHandle1</text>
<path d="M480 656C468 654 466 660 472 663C478 665 480 671 468 671" stroke="#7aa4d8" fill="none"/><text x="484" y="667" class="o">curve2</text>
<circle cx="473" cy="683" r="8" fill="#333" stroke="#ccc"/><circle cx="470" cy="686" r="3" fill="#c8b070"/><rect x="473" y="677" width="5" height="6" fill="#7aa4d8"/><text x="484" y="687" class="o">defaultLightSet</text>
<circle cx="473" cy="703" r="8" fill="#333" stroke="#ccc"/><circle cx="470" cy="706" r="3" fill="#c8b070"/><rect x="473" y="697" width="5" height="6" fill="#7aa4d8"/><text x="484" y="707" class="o">defaultObjectSet</text>
</svg>
<rect x="691" y="173" width="14" height="728" fill="#565656"/>
<rect x="691" y="174" width="14" height="15" rx="2" fill="#5c5c5c" stroke="#333"/><path d="M694 184H702L698 179Z" fill="#eee"/>
<rect x="693" y="519" width="10" height="18" fill="url(#grip)"/>
<rect x="691" y="868" width="14" height="15" rx="2" fill="#5c5c5c" stroke="#333"/><path d="M694 878H702L698 873Z" fill="#ccc"/><rect x="691" y="884" width="14" height="15" rx="2" fill="#5c5c5c" stroke="#333"/><path d="M694 889H702L698 894Z" fill="#ccc"/>
<rect x="421" y="901" width="267" height="15" fill="#3a3a3a"/>
<rect x="423" y="902" width="13" height="13" rx="1" fill="#5a5a5a"/><path d="M431 905V911L426 908Z" fill="#ddd"/><rect x="437" y="902" width="184" height="13" fill="#565656"/><rect x="520" y="904" width="18" height="10" fill="url(#grip)"/><rect x="621" y="902" width="36" height="13" fill="url(#hatch)"/><rect x="657" y="902" width="13" height="13" rx="1" fill="#5a5a5a"/><path d="M666 905V911L661 908Z" fill="#ddd"/><rect x="672" y="902" width="13" height="13" rx="1" fill="#5a5a5a"/><path d="M677 905V911L682 908Z" fill="#ddd"/>
<rect x="688" y="901" width="17" height="15" fill="#3a3a3a"/>
<rect x="515" y="918" width="88" height="3" fill="url(#dots)"/>

<!-- Viewport -->
<rect x="711.500" y="127.500" width="669" height="795" fill="#444" stroke="#a8a8a8"/>
<text x="720" y="141">View</text><text x="760" y="141">Shading</text><text x="818" y="141">Lighting</text><text x="877" y="141">Show</text><text x="920" y="141">Renderer</text><text x="984" y="141">Panels</text>
<rect x="712" y="167" width="668" height="755" fill="url(#vp)"/>
<!-- viewport toolbar -->
<path d="M716 147V163M841 147V163M997 147V163M1150 147V163M1240 147V163M1272 147V163" stroke="#2a2a2a" stroke-width="2"/>
<use href="#cam" x="723" y="147"/><use href="#cam" transform="translate(745 148) scale(.85)"/>
<rect x="764" y="147" width="14" height="16" fill="#ddd" stroke="#222"/><rect x="770" y="149" width="6" height="10" fill="#3b8"/>
<path d="M787 158L796 147L802 150L796 162Z" fill="#ccc" stroke="#222"/><path d="M790 156L798 150" stroke="#3a3"/>
<path d="M806 149L813 156M820 149L813 156M813 156V165" stroke="#c22" stroke-width="2"/><circle cx="815" cy="153" r="4" fill="#ddd" stroke="#c22"/>
<path d="M825 146H822V164H825M835 146H838V164H835" stroke="#2db52d" fill="none" stroke-width="2"/><path d="M826 163L834 147" stroke="#c22" stroke-width="3"/>
<g fill="#545454" stroke="#2f2f2f"><rect x="852" y="145" width="21" height="21" rx="3"/><rect x="912" y="145" width="21" height="21" rx="3"/><rect x="1024" y="145" width="21" height="21" rx="3"/><rect x="1063" y="145" width="21" height="21" rx="3"/></g>
<path d="M856 155L863 149L870 155L863 161Z" fill="#ccc" stroke="#333"/>
<rect x="876" y="148" width="15" height="14" fill="#111" stroke="#ddd"/><rect x="878" y="151" width="11" height="8" fill="#ddd"/>
<rect x="895" y="148" width="14" height="14" fill="#eee"/><circle cx="902" cy="155" r="6" fill="url(#sb)"/>
<circle cx="923" cy="155" r="7" fill="#888" stroke="#ccc"/>
<rect x="936" y="148" width="14" height="14" fill="#999" stroke="#ddd"/><path d="M936 148L950 162M950 148L936 162" stroke="#eee"/>
<rect x="956" y="148" width="14" height="14" fill="#eee" stroke="#3c3"/><rect x="959" y="151" width="4" height="4" fill="#38a"/><rect x="964" y="155" width="4" height="4" fill="#38a"/>
<rect x="976" y="148" width="14" height="14" fill="#eee" stroke="#3c3"/><text x="983" y="159" class="m" style="fill:#111;font-weight:bold;font-size:11px">T</text>
<path d="M1009 150L1019 148V160L1012 163L1009 161Z" fill="none" stroke="#ddd"/><path d="M1009 150L1012 152V163M1012 152L1019 148" stroke="#ddd" fill="none"/>
<path d="M1028 150L1038 148V160L1031 163L1028 161Z" fill="#3e80c4" stroke="#bde"/>
<path d="M1048 150L1058 148V160L1051 163L1048 161Z" fill="#5a9ae0" stroke="#eee"/>
<circle cx="1074" cy="155" r="7" fill="#ddd"/><rect x="1069" y="150" width="5" height="5" fill="#111"/><rect x="1074" y="155" width="5" height="5" fill="#111"/>
<circle cx="1094" cy="155" r="6" fill="url(#sy)"/><circle cx="1113" cy="155" r="6" fill="url(#sgr)"/><circle cx="1134" cy="155" r="6" fill="url(#sgr)" opacity=".8"/>
<path d="M1158 162V156A6 6 0 0 1 1170 156V162Z" fill="#bbb"/><circle cx="1185" cy="155" r="6" fill="#777"/><circle cx="1206" cy="155" r="6" fill="#777"/><rect x="1220" y="148" width="12" height="14" fill="#777" transform="rotate(20 1226 155)"/>
<rect x="1251" y="149" width="12" height="12" fill="none" stroke="#3c3" stroke-dasharray="2 1"/><use href="#arw" transform="translate(1257 155) scale(.7)"/>
<rect x="1279" y="145" width="18" height="21" rx="3" fill="#2d2d2d"/><path d="M1283 149L1291 148V160L1285 162H1283Z" fill="none" stroke="#ccc"/>
<rect x="1299" y="145" width="18" height="21" rx="3" fill="#2d2d2d"/><path d="M1304 148H1313V157H1304ZM1301 152H1310V161H1301Z" fill="none" stroke="#ccc"/>
<rect x="1319" y="145" width="17" height="21" rx="3" fill="#2d2d2d"/><path d="M1323 155L1331 150M1323 155L1331 160" stroke="#ccc"/><circle cx="1323" cy="155" r="2.500" fill="#ddd"/><circle cx="1331" cy="150" r="2.500" fill="#ddd"/><circle cx="1331" cy="160" r="2.500" fill="#ddd"/>
<!-- view cube -->
<path d="M1297 195L1303 192H1342L1348 198V236L1342 243H1303L1297 236Z" fill="#9aa4af" opacity=".8"/><path d="M1305 192V200H1297M1340 192V200H1348M1297 235H1305V243M1340 243V235H1348" fill="none" stroke="#7e8894"/><path d="M1348 198L1354 202V234L1342 243V238H1348Z" fill="#838e9a"/><path d="M1297 243H1352L1350 247H1296Z" fill="#4c5763" opacity=".7"/>
<text x="1320" y="222" class="m" style="font-size:12px;font-weight:bold;fill:#5f6a76">LEFT</text>
<!-- joints (behind curve) -->
<path d="M1120 368V390" stroke="#000080"/><path d="M1120 390V406M1128 410H1143" stroke="#8a3a20"/>
<g fill="none" stroke="#41ef9c" stroke-width="1.500">
<circle cx="1120" cy="412" r="6"/><path d="M1114 412H1126M1120 406V418"/>
<path d="M1120 419L1114 437H1127Z M1120 419V449"/><circle cx="1121" cy="443" r="6"/><path d="M1115 443H1127"/>
<path d="M1121 450L1115 468H1128Z M1121 450V480"/><circle cx="1121" cy="474" r="6"/><path d="M1115 474H1127"/>
<path d="M1121 481L1115 500H1128Z M1121 481V510"/>
<path d="M1122 513L1116 532H1128Z M1122 513V544"/><circle cx="1122" cy="538" r="6"/><path d="M1116 538H1128"/>
<path d="M1122 545L1116 563H1128Z M1122 545V575"/><circle cx="1122" cy="569" r="6"/><path d="M1116 569H1128"/>
<path d="M1122 576L1116 595H1129Z M1122 576V607"/><circle cx="1122" cy="601" r="6"/><path d="M1116 601H1128"/>
<path d="M1123 608L1117 627H1129Z M1123 608V639"/><circle cx="1123" cy="633" r="6"/><path d="M1117 633H1129"/>
<path d="M1123 645L1117 659H1129Z"/><circle cx="1123" cy="667" r="6"/><path d="M1117 667H1129"/>
</g>
<path d="M1120 412H1126M1121 443H1127M1122 538H1128" stroke="#0000c8" stroke-width="1.500"/>
<path d="M1121 452V478" stroke="#111" stroke-width="1"/>
<!-- curve -->
<path d="M840 432C858 441 872 450 887 460C902 470 913 480 928 488C948 498 967 504 987 509C1002 513 1018 516 1032 517H1076C1090 515 1103 512 1116 507C1128 501 1140 495 1151 489C1162 483 1172 477 1184 471" fill="none" stroke="#222" stroke-width="14"/>
<path d="M840 429C858 438 872 447 887 457C902 467 913 477 928 485C948 495 967 501 987 506C1002 510 1018 513 1032 514H1076C1090 512 1103 509 1116 504C1128 498 1140 492 1151 486C1162 480 1172 474 1182 468" fill="none" stroke="#5e5e5e" stroke-width="14"/>
<path d="M840 431C858 440 872 449 887 459C902 469 913 479 928 487C948 497 967 503 987 508C1002 512 1018 515 1032 516H1076" fill="none" stroke="#6c6c6c" stroke-width="5"/>
<!-- cylinder -->
<path d="M1109 672H1137V766L1143 782V811L1132 814V866H1118V814L1106 811V783L1109 768Z" fill="#5a5a5a"/>
<path d="M1109 672H1111V740L1110 768L1108 783V808H1106V783L1109 768Z" fill="#1d1d1d"/>
<path d="M1121 672H1132V755L1135 782V814H1121Z" fill="#707070"/>
<path d="M1132 672H1137V766L1140 780H1135L1132 755Z" fill="#4c4c4c"/>
<path d="M1122 814H1129V866H1122Z" fill="#747474"/><path d="M1118 814H1119V866H1118Z" fill="#222"/>
<path d="M1109 672L1118 670L1130 671L1137 672V674H1109Z" fill="#3a3a3a"/>
<!-- manipulator -->
<path d="M1118 659L1123 640L1128 659Z" fill="url(#yl)"/>
<path d="M1123 660V718" stroke="#f0f020" stroke-dasharray="1.500 1.500"/>
<path d="M1123 719H1140L1160 721H1184" stroke="#101080" stroke-dasharray="3 1" stroke-width="1.200"/>
<path d="M1184 717L1208 723L1184 727Z" fill="url(#bl)"/>
<rect x="1113.500" y="709.500" width="20" height="20" fill="none" stroke="#66d0e0" stroke-dasharray="1.500 1.500"/>
<circle cx="1132" cy="709" r="4" fill="none" stroke="#e01010" stroke-width="2" stroke-dasharray="1.500 1"/>
<!-- grid -->
<path d="M956 922L966 907H977L1010 912L1045 916L1070 922M962 915L1000 917L1035 922M978 908L969 922M993 910L984 922M1010 912L1000 922M1013 913L1020 922M1030 915L1027 922" stroke="#8a8a8a" fill="none" stroke-width=".8"/>
<text x="1023" y="917" style="fill:#0b4a22;font-size:11.500px">persp</text>
<path d="M737 895V880" stroke="#1fae3f"/><path d="M737 895L748 893" stroke="#b02020"/><path d="M737 895L732 900" stroke="#2040c0"/><text x="734" y="882" style="font-size:9px;fill:#2ece55">y</text><text x="747" y="896" style="font-size:8px;fill:#c04040">x</text>

<!-- Channel box -->
<rect x="1387" y="133" width="36" height="6" fill="url(#dots)"/><rect x="1581" y="133" width="40" height="6" fill="url(#dots)"/>
<text x="1441" y="140" style="font-size:11px">Channel Box / Layer Editor</text>
<rect x="1625" y="130" width="12" height="11" rx="2" fill="#2f2f2f" stroke="#666"/><rect x="1628" y="133" width="6" height="6" fill="none" stroke="#ddd"/><rect x="1640" y="130" width="12" height="11" rx="2" fill="#2f2f2f" stroke="#666"/><path d="M1643 133L1649 138M1649 133L1643 138" stroke="#ddd"/>
<path d="M1600 158V149" stroke="#1e9a3a" stroke-width="3"/><path d="M1597 151L1600 146L1603 151Z" fill="#4c4"/><path d="M1592 157H1600" stroke="#2222cc" stroke-width="3"/><path d="M1600 158L1605 161" stroke="#c22" stroke-width="3"/>
<circle cx="1620" cy="155" r="7" fill="#555" stroke="#999" stroke-width="1.500"/><path d="M1620 148A7 7 0 0 1 1620 162Z" fill="#999"/>
<path d="M1634 162L1645 151M1638 150H1646V158" stroke="#888" stroke-width="2" fill="none"/>
<text x="1397" y="181">Channels</text><text x="1461" y="181">Edit</text><text x="1497" y="181">Object</text><text x="1547" y="181">Show</text>
<rect x="1390.500" y="188.500" width="259" height="465" fill="#404040" stroke="#222"/><rect x="1391.500" y="189.500" width="257" height="463" fill="none" stroke="#4e4e4e"/>
<rect x="1393" y="447" width="254" height="204" fill="#2b2b2b"/>
<text x="1394" y="204" class="c b">joint1</text>
<g fill="#303030"><rect x="1582" y="209" width="64" height="15"/><rect x="1582" y="225" width="64" height="15"/><rect x="1582" y="241" width="64" height="15"/><rect x="1582" y="257" width="64" height="15"/><rect x="1582" y="273" width="64" height="15"/><rect x="1582" y="289" width="64" height="15"/><rect x="1582" y="305" width="64" height="15"/><rect x="1582" y="321" width="64" height="15"/><rect x="1582" y="337" width="64" height="15"/><rect x="1582" y="353" width="64" height="15"/></g>
<text x="1580" y="220" class="c r">Translate X</text><text x="1583" y="220" class="c">0</text>
<text x="1580" y="236" class="c r">Translate Y</text><text x="1583" y="236" class="c">14.411</text>
<text x="1580" y="252" class="c r">Translate Z</text><text x="1583" y="252" class="c">0</text>
<text x="1580" y="268" class="c r">Rotate X</text><text x="1583" y="268" class="c">0</text>
<text x="1580" y="284" class="c r">Rotate Y</text><text x="1583" y="284" class="c">0</text>
<text x="1580" y="300" class="c r">Rotate Z</text><text x="1583" y="300" class="c">0</text>
<text x="1580" y="316" class="c r">Scale X</text><text x="1583" y="316" class="c">1</text>
<text x="1580" y="332" class="c r">Scale Y</text><text x="1583" y="332" class="c">1</text>
<text x="1580" y="348" class="c r">Scale Z</text><text x="1583" y="348" class="c">1</text>
<text x="1580" y="364" class="c r">Visibility</text><text x="1583" y="364" class="c">on</text>
<text x="1580" y="380" class="c r">Radius</text><text x="1583" y="380" class="c">0.5</text>
<text x="1394" y="396" class="c b">OUTPUTS</text><text x="1403" y="412" class="c b">bindPose1</text><text x="1403" y="428" class="c b">skinCluster1</text>
<rect x="1384" y="390" width="3" height="270" fill="url(#dots)"/>
<rect x="1475" y="657" width="84" height="3" fill="url(#dots)"/>
<!-- side tabs -->
<path d="M1654 127H1670V292H1654Z" fill="#5b5b5b"/><path d="M1654 293H1670V399H1654Z" fill="#404040" stroke="#2a2a2a"/>
<text transform="translate(1659 139) rotate(90)" style="font-size:11.500px" textLength="142">Channel Box / Layer Editor</text>
<text transform="translate(1659 306) rotate(90)" style="font-size:11.500px" textLength="84" class="f">Attribute Editor</text>

<!-- Layer editor -->
<path d="M1452 686V668H1514V686ZM1514 668H1564V686H1514Z" fill="#3c3c3c" stroke="#2a2a2a"/>
<rect x="1390.500" y="686.500" width="260" height="235" rx="2" fill="#444" stroke="#2d2d2d"/>
<path d="M1390 687V669Q1390 667 1392 667H1450Q1452 667 1452 669V687Z" fill="#5b5b5b" stroke="#2d2d2d"/>
<text x="1401" y="681">Display</text><text x="1465" y="682">Render</text><text x="1526" y="682">Anim</text>
<text x="1400" y="701">Layers</text><text x="1449" y="701">Options</text><text x="1506" y="701">Help</text>
<path d="M1552 712V727" stroke="#a22" stroke-width="1.500"/><path d="M1549 717L1552 711L1555 717Z" fill="#c22"/><path d="M1556 716L1564 713L1568 716L1560 719ZM1556 720L1564 717L1568 720L1560 723ZM1556 724L1564 721L1568 724L1560 727Z" fill="#eee" stroke="#333" stroke-width=".5"/>
<path d="M1576 712V727" stroke="#a22" stroke-width="1.500"/><path d="M1573 722L1576 728L1579 722Z" fill="#c22"/><path d="M1580 716L1588 713L1592 716L1584 719ZM1580 720L1588 717L1592 720L1584 723ZM1580 724L1588 721L1592 724L1584 727Z" fill="#eee" stroke="#333" stroke-width=".5"/>
<path d="M1601 727L1613 719L1618 722L1607 727Z" fill="#f0f0f0"/><circle cx="1614" cy="716" r="4" fill="#f09a20" stroke="#fd6" stroke-dasharray="1 1"/>
<path d="M1626 727L1637 720L1642 723L1632 727Z" fill="#f0f0f0"/><circle cx="1630" cy="720" r="3.500" fill="url(#sb)"/><circle cx="1639" cy="716" r="4" fill="#f09a20" stroke="#fd6" stroke-dasharray="1 1"/>
<rect x="1394" y="734" width="251" height="184" rx="2" fill="#2b2b2b" stroke="#3a3a3a"/>
<rect x="1396" y="901" width="14" height="15" rx="1" fill="#5a5a5a"/><path d="M1406 905V912L1401 908.500Z" fill="#ddd"/><rect x="1412" y="901" width="140" height="15" fill="#5e5e5e"/><rect x="1473" y="903" width="18" height="11" fill="url(#grip)"/><rect x="1552" y="901" width="61" height="15" fill="url(#hatch)"/><rect x="1613" y="901" width="14" height="15" rx="1" fill="#5a5a5a"/><path d="M1622 905V912L1617 908.500Z" fill="#ddd"/><rect x="1628" y="901" width="14" height="15" rx="1" fill="#5a5a5a"/><path d="M1633 905V912L1638 908.500Z" fill="#ddd"/>

<!-- Time slider -->
<rect y="923" width="1670" height="1" fill="#555"/><rect y="925" width="1670" height="1" fill="#333"/>
<rect x="10" y="927" width="1362" height="31" fill="#3f3f3f" stroke="#333"/>
<rect x="14" y="928" width="8" height="29" fill="#2a2a2a"/><text x="19" y="952" class="m f" style="fill:#fff">1</text>
<path stroke="#858585" stroke-width="1.500" d="M42 941V957M75.500 941V957M109.500 941V957M143 941V957M177 941V957M210.500 941V957M244 941V957M278 941V957M312 941V957M345.500 941V957M379 941V957M413 941V957M447 941V957M480.500 941V957M514 941V957M548 941V957M582 941V957M615.500 941V957M649 941V957M683 941V957M717 941V957M750.500 941V957M784 941V957M818 941V957M852 941V957M885.500 941V957M919 941V957M953 941V957M987 941V957M1020.500 941V957M1054 941V957M1088 941V957M1122 941V957M1155.500 941V957M1189 941V957M1223 941V957M1257 941V957M1290.500 941V957M1324 941V957M1358 941V957"/>
<text x="46" y="937" class="t">5</text><text x="84" y="937" class="t">10</text><text x="118" y="937" class="t">15</text><text x="151" y="937" class="t">20</text><text x="185" y="937" class="t">25</text><text x="219" y="937" class="t">30</text><text x="252" y="937" class="t">35</text><text x="286" y="937" class="t">40</text><text x="320" y="937" class="t">45</text><text x="354" y="937" class="t">50</text><text x="387" y="937" class="t">55</text><text x="421" y="937" class="t">60</text><text x="455" y="937" class="t">65</text><text x="489" y="937" class="t">70</text><text x="522" y="937" class="t">75</text><text x="556" y="937" class="t">80</text><text x="590" y="937" class="t">85</text><text x="624" y="937" class="t">90</text><text x="657" y="937" class="t">95</text><text x="695" y="937" class="t">100</text><text x="729" y="937" class="t">105</text><text x="762" y="937" class="t">110</text><text x="796" y="937" class="t">115</text><text x="830" y="937" class="t">120</text><text x="864" y="937" class="t">125</text><text x="897" y="937" class="t">130</text><text x="931" y="937" class="t">135</text><text x="965" y="937" class="t">140</text><text x="999" y="937" class="t">145</text><text x="1032" y="937" class="t">150</text><text x="1066" y="937" class="t">155</text><text x="1100" y="937" class="t">160</text><text x="1134" y="937" class="t">165</text><text x="1167" y="937" class="t">170</text><text x="1201" y="937" class="t">175</text><text x="1235" y="937" class="t">180</text><text x="1269" y="937" class="t">185</text><text x="1302" y="937" class="t">190</text><text x="1336" y="937" class="t">195</text><text x="1366" y="937" class="t">20</text>
<rect x="1376" y="932" width="69" height="20" rx="2" fill="#303030"/><text x="1379" y="947" class="f">1.00</text>
<g fill="#bdbdbd" stroke="#222" stroke-width=".6"><path d="M1453 936V952H1455V936ZM1456 944L1463 937V951ZM1463 944L1470 937V951Z"/><path d="M1482 936V952H1484V936ZM1486 944L1497 936V952Z"/><path d="M1511 936V952H1513V936ZM1515 944L1526 936V952Z"/><path d="M1540 944L1552 935V953Z"/><path d="M1566 935L1579 944L1566 953Z"/><path d="M1594 936L1605 944L1594 952ZM1607 936H1609V952H1607Z"/><path d="M1622 936L1633 944L1622 952ZM1635 936H1637V952H1635Z"/><path d="M1648 937L1654 944L1648 951ZM1655 937L1661 944L1655 951ZM1663 936H1665V952H1663Z"/></g>
<path d="M1511 932V956M1608 932V956" stroke="#c83030"/>
<rect y="961" width="1670" height="1" fill="#333"/><rect y="962" width="1670" height="1" fill="#505050"/>
<!-- Range -->
<rect x="7" y="965" width="69" height="20" rx="2" fill="#303030"/><text x="10" y="980" class="f">1.00</text>
<rect x="80" y="965" width="68" height="20" rx="2" fill="#303030"/><text x="84" y="980" class="f">1.00</text>
<rect x="157" y="967" width="1079" height="18" fill="#666"/><rect x="156" y="966" width="1081" height="20" fill="none" stroke="#2a2a2a" stroke-width="2"/>
<rect x="162" y="970" width="11" height="12" fill="#5c5c5c"/><path d="M173 970V982H162" fill="none" stroke="#222"/><text x="179" y="980" class="f">1</text>
<text x="1212" y="980" class="r f">200</text><rect x="1217" y="970" width="11" height="12" fill="#5c5c5c"/><path d="M1228 970V982H1217" fill="none" stroke="#222"/>
<rect x="1241" y="965" width="68" height="20" rx="2" fill="#303030"/><text x="1244" y="980" class="f">200.00</text>
<rect x="1313" y="965" width="68" height="20" rx="2" fill="#303030"/><text x="1316" y="980" class="f">200.00</text>
<path d="M1387 970H1397L1392 976Z" fill="none" stroke="#aaa"/>
<rect x="1404" y="965" width="100" height="20" rx="2" fill="#484848" stroke="#3a3a3a"/><text x="1407" y="980" class="f">No Anim Layer</text>
<path d="M1510 970H1520L1515 976Z" fill="none" stroke="#aaa"/>
<rect x="1527" y="965" width="101" height="20" rx="2" fill="#484848" stroke="#3a3a3a"/><text x="1530" y="980" class="f">No Character Set</text>
<circle cx="1635" cy="975" r="3" fill="none" stroke="#bbb"/><path d="M1638 975H1648V979M1644 975V978" stroke="#bbb" fill="none"/>
<rect x="1655" y="966" width="13" height="18" fill="#eee" stroke="#333"/><rect x="1655" y="966" width="13" height="4" fill="#38a"/><path d="M1657 982L1666 972M1657 976L1664 982" stroke="#b22"/>
<rect y="989" width="1670" height="1" fill="#333"/>
<!-- Command -->
<text x="11" y="1009">Python</text>
<rect x="53" y="993" width="796" height="23" rx="2" fill="#2c2c2c"/><rect x="857" y="993" width="796" height="23" rx="2" fill="#2c2c2c"/>
<rect x="1655" y="996" width="13" height="18" fill="#333" stroke="#ccc"/><rect x="1655" y="996" width="13" height="4" fill="#38a"/><rect x="1657" y="1002" width="9" height="3" fill="#bbb"/><rect x="1657" y="1007" width="9" height="5" fill="#bbb"/>
<rect y="1019" width="1670" height="1" fill="#333"/>
<!-- Help -->
<rect x="7.500" y="1023.500" width="1680" height="21" fill="#444" stroke="#2c2c2c"/>
<text x="20" y="1038" textLength="585" style="font-size:11px;fill:#d0d0d0">Move Tool: Use manipulator to move object(s). Use edit mode to change pivot (HOME).  Ctrl+LMB to move perpendicular.</text>
<path d="M1658 1043L1669 1032M1662 1043L1669 1036M1666 1043L1669 1040" stroke="#999"/>
</svg>
</body></html>
